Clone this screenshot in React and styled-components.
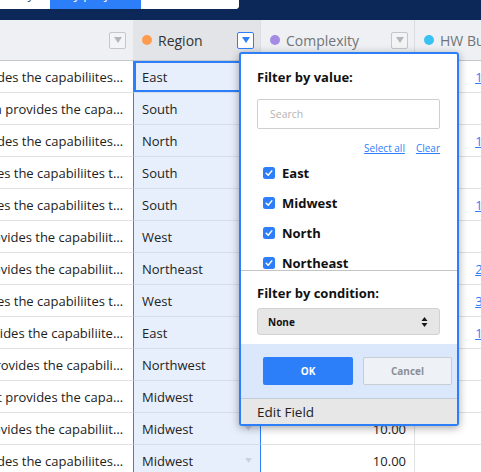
import React from "react";
import styled, { createGlobalStyle } from "styled-components";

const GlobalStyle = createGlobalStyle`
  html, body { margin: 0; padding: 0; background: #fff; }
  body { font-family: "Open Sans", "Liberation Sans", sans-serif; color: #222; overflow: hidden; }
  * { box-sizing: border-box; }
`;

const BLUE = "#2d7ff9";

const Page = styled.div`
  width: 481px;
  height: 472px;
  overflow: hidden;
  position: relative;
  background: #fff;
`;

const TopBar = styled.div`
  height: 20px;
  background: #0b2858;
  overflow: hidden;
`;

const SegGroup = styled.div`
  display: flex;
  width: 239px;
  height: 30px;
  margin-top: -21px;
  border-radius: 0 0 4px 0;
  overflow: hidden;
  background: #fff;
`;

const Seg = styled.div`
  width: ${(p) => p.$w}px;
  display: flex;
  align-items: center;
  justify-content: ${(p) => p.$align || "center"};
  font-size: 13px;
  color: ${(p) => (p.$active ? "#fff" : "#555")};
  background: ${(p) => (p.$active ? BLUE : "#fff")};
  white-space: nowrap;
  overflow: hidden;
`;

const Table = styled.div`
  display: flex;
  flex-direction: column;
`;

const HeaderRow = styled.div`
  display: grid;
  grid-template-columns: 133px 128px 154px 90px;
  height: 41px;
  border-bottom: 1px solid #c4c7cc;
`;

const HeadCell = styled.div`
  display: flex;
  align-items: center;
  gap: 6px;
  padding: 0 6px 0 ${(p) => (p.$pl != null ? p.$pl : 9)}px;
  background: ${(p) => (p.$active ? "#e2e4e8" : "#eef0f3")};
  border-right: 1px solid ${(p) => (p.$noBorder ? "transparent" : "#dadde2")};
  font-size: 14px;
  color: ${(p) => (p.$active ? "#333" : "#707478")};
  white-space: nowrap;
  overflow: hidden;
`;

const HeadLabel = styled.span`
  flex: 1;
  overflow: hidden;
`;

const Dot = styled.span`
  width: 10px;
  height: 10px;
  border-radius: 50%;
  background: ${(p) => p.$color};
  flex: none;
`;

const MenuBtn = styled.span`
  width: 17px;
  height: 17px;
  flex: none;
  border-radius: 2px;
  border: 1px solid ${(p) => (p.$active ? BLUE : "#c3c6cb")};
  background: ${(p) => (p.$active ? "#fff" : "#f3f4f6")};
  display: flex;
  align-items: center;
  justify-content: center;
`;

const Row = styled.div`
  display: grid;
  grid-template-columns: 133px 128px 154px 90px;
  height: 32px;
`;

const DescCell = styled.div`
  display: flex;
  justify-content: flex-end;
  align-items: center;
  padding-right: 10px;
  overflow: hidden;
  white-space: nowrap;
  font-size: 13px;
  color: #222;
  border-bottom: 1px solid #e2e2e2;
`;

const RegionCell = styled.div`
  display: flex;
  align-items: center;
  justify-content: space-between;
  padding: 0 8px 0 8px;
  background: #e7effc;
  border-left: 1px solid ${BLUE};
  border-right: 1px solid ${BLUE};
  border-bottom: 1px solid #d5dde9;
  font-size: 13px;
  color: #222;
  box-shadow: ${(p) => (p.$selected ? `inset 0 0 0 2px ${BLUE}` : "none")};
`;

const NumCell = styled.div`
  display: flex;
  align-items: center;
  justify-content: flex-end;
  padding-right: ${(p) => p.$pr}px;
  font-size: 13px;
  color: #222;
  border-right: 1px solid #e0e0e0;
  border-bottom: 1px solid #e2e2e2;
  white-space: nowrap;
`;

const NumLink = styled.span`
  color: ${(p) => (p.$link ? BLUE : "#222")};
  text-decoration: ${(p) => (p.$link ? "underline" : "none")};
`;

const Popup = styled.div`
  position: absolute;
  left: 239px;
  top: 52px;
  width: 220px;
  height: 374px;
  border: 2px solid ${BLUE};
  border-radius: 3px;
  background: #fff;
  box-shadow: 0 2px 8px rgba(0, 0, 0, 0.35);
  display: flex;
  flex-direction: column;
  overflow: hidden;
  z-index: 5;
`;

const ValueSection = styled.div`
  height: 216px;
  flex: none;
  overflow: hidden;
  padding: 14px 17px 0 16px;
  display: flex;
  flex-direction: column;
`;

const Title = styled.div`
  font-size: 13px;
  font-weight: 700;
  line-height: 18px;
  color: #111;
`;

const SearchBox = styled.div`
  margin-top: 13px;
  height: 30px;
  border: 1px solid #cfcfcf;
  border-radius: 2px;
  display: flex;
  align-items: center;
  padding-left: 12px;
  font-size: 10.5px;
  color: #b4b4b4;
  flex: none;
`;

const Links = styled.div`
  margin-top: 13px;
  display: flex;
  justify-content: flex-end;
  gap: 11px;
  line-height: 12px;
  font-size: 10px;
  flex: none;
`;

const LinkText = styled.span`
  color: ${BLUE};
  text-decoration: underline;
`;

const List = styled.div`
  margin-top: 4px;
  display: flex;
  flex-direction: column;
  padding-left: 6px;
`;

const Item = styled.div`
  height: 30px;
  display: flex;
  align-items: center;
  gap: 7px;
  font-size: 13px;
  font-weight: 700;
  color: #111;
  flex: none;
`;

const Divider = styled.div`
  height: 1px;
  background: #c4c4c4;
  flex: none;
`;

const CondSection = styled.div`
  height: 73px;
  flex: none;
  padding: 13px 17px 0 16px;
  display: flex;
  flex-direction: column;
`;

const SelectBox = styled.div`
  margin-top: 6px;
  height: 27px;
  border: 1px solid #d2d2d2;
  border-radius: 3px;
  background: #e6e6e6;
  display: flex;
  align-items: center;
  justify-content: space-between;
  padding: 0 11px 0 10px;
  font-size: 10px;
  font-weight: 700;
  color: #111;
`;

const ActionBar = styled.div`
  height: 54px;
  flex: none;
  background: #dbe7fb;
  display: flex;
  gap: 10px;
  padding: 13px 0 0 22px;
`;

const Button = styled.div`
  width: ${(p) => p.$w}px;
  height: 28px;
  border-radius: 2px;
  display: flex;
  align-items: center;
  justify-content: center;
  font-size: 10px;
  font-weight: 700;
  background: ${(p) => (p.$primary ? BLUE : "#eef1f5")};
  color: ${(p) => (p.$primary ? "#fff" : "#8a8f96")};
  border: ${(p) => (p.$primary ? "none" : "1px solid #c9cdd2")};
`;

const EditField = styled.div`
  flex: 1;
  background: #e7e7e7;
  border-top: 1px solid #c3ccd8;
  display: flex;
  align-items: center;
  padding-left: 16px;
  font-size: 13.5px;
  color: #222;
`;

const Tri = ({ color, w = 8, h = 6 }) => (
  <svg width={w} height={h} viewBox={`0 0 ${w} ${h}`}>
    <path d={`M0 0 H${w} L${w / 2} ${h} Z`} fill={color} />
  </svg>
);

const Check = () => (
  <svg width="12" height="12" viewBox="0 0 12 12" style={{ flex: "none" }}>
    <rect x="0" y="0" width="12" height="12" rx="2.5" fill={BLUE} />
    <path d="M3.2 6.3 L5.2 8.3 L8.8 3.9" fill="none" stroke="#fff" strokeWidth="1.5" strokeLinecap="round" strokeLinejoin="round" />
  </svg>
);

const UpDown = () => (
  <svg width="7" height="12" viewBox="0 0 7 12">
    <path d="M0.5 5 L3.5 1 L6.5 5 Z" fill="#1a1a1a" />
    <path d="M0.5 7 L3.5 11 L6.5 7 Z" fill="#1a1a1a" />
  </svg>
);

const rows = [
  ["provides the capabiliites…", "East", "10", true],
  ["Platform provides the capa…", "South", "5", false],
  ["provides the capabiliites…", "North", "12", true],
  ["provides the capabiliites t…", "South", "9", true],
  ["provides the capabiliites t…", "South", "15", true],
  ["provides the capabiliit…", "West", "9", true],
  ["provides the capabiliit…", "Northeast", "20", true],
  ["provides the capabiliites t…", "West", "30", true],
  ["provides the capabiliite…", "East", "10", true],
  ["provides the capabili…", "Northwest", "1", false],
  ["It provides the capa…", "Midwest", "", false],
  ["provides the capabiliit…", "Midwest", "", false],
  ["provides the capabiliites…", "Midwest", "", false],
];

export default function App() {
  return (
    <Page>
      <GlobalStyle />
      <TopBar>
        <SegGroup>
          <Seg $w={50} $align="flex-end" style={{ paddingRight: 16 }}>Activity</Seg>
          <Seg $w={91} $active>By project</Seg>
          <Seg $w={98}>Timeline</Seg>
        </SegGroup>
      </TopBar>
      <Table>
        <HeaderRow>
          <HeadCell $noBorder $pl={0}>
            <HeadLabel />
            <MenuBtn>
              <Tri color="#b3b6bb" />
            </MenuBtn>
          </HeadCell>
          <HeadCell $active>
            <Dot $color="#ff9b4d" />
            <HeadLabel>Region</HeadLabel>
            <MenuBtn $active>
              <Tri color={BLUE} />
            </MenuBtn>
          </HeadCell>
          <HeadCell>
            <Dot $color="#a48ce4" />
            <HeadLabel>Complexity</HeadLabel>
            <MenuBtn>
              <Tri color="#b3b6bb" />
            </MenuBtn>
          </HeadCell>
          <HeadCell>
            <Dot $color="#39c1f2" />
            <HeadLabel>HW Budget</HeadLabel>
          </HeadCell>
        </HeaderRow>
        {rows.map(([desc, region, hw, link], i) => (
          <Row key={i}>
            <DescCell>
              <span>{desc}</span>
            </DescCell>
            <RegionCell $selected={i === 0}>
              <span>{region}</span>
              <Tri color="#c9d2e2" w={7} h={5} />
            </RegionCell>
            <NumCell $pr={8}>10.00</NumCell>
            <NumCell $pr={14}>
              <NumLink $link={link}>{hw}</NumLink>
            </NumCell>
          </Row>
        ))}
      </Table>
      <Popup>
        <ValueSection>
          <Title>Filter by value:</Title>
          <SearchBox>Search</SearchBox>
          <Links>
            <LinkText>Select all</LinkText>
            <LinkText>Clear</LinkText>
          </Links>
          <List>
            {["East", "Midwest", "North", "Northeast", "Northwest", "South", "West"].map((v) => (
              <Item key={v}>
                <Check />
                {v}
              </Item>
            ))}
          </List>
        </ValueSection>
        <Divider />
        <CondSection>
          <Title>Filter by condition:</Title>
          <SelectBox>
            <span>None</span>
            <UpDown />
          </SelectBox>
        </CondSection>
        <ActionBar>
          <Button $primary $w={90}>OK</Button>
          <Button $w={89}>Cancel</Button>
        </ActionBar>
        <EditField>Edit Field</EditField>
      </Popup>
    </Page>
  );
}
